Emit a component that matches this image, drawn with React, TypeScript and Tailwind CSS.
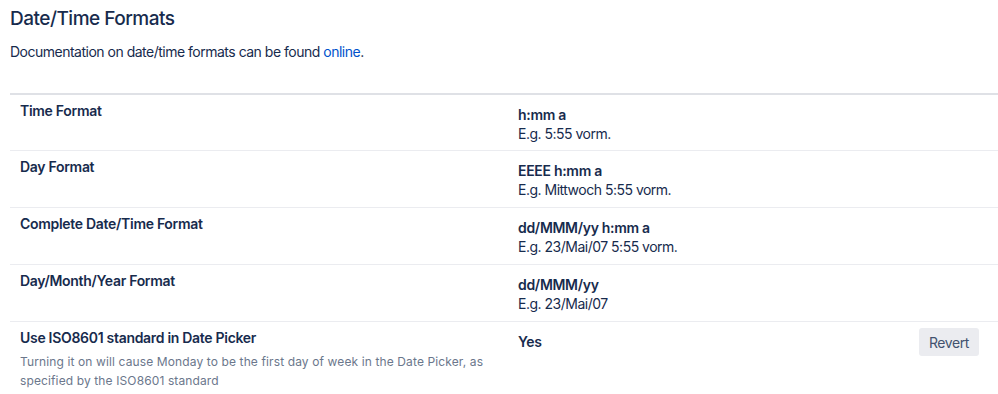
import React from "react";

type Row = { label: string; value: string; example?: string; desc?: string; revert?: boolean };

const rows: Row[] = [
  { label: "Time Format", value: "h:mm a", example: "E.g. 5:55 vorm." },
  { label: "Day Format", value: "EEEE h:mm a", example: "E.g. Mittwoch 5:55 vorm." },
  { label: "Complete Date/Time Format", value: "dd/MMM/yy h:mm a", example: "E.g. 23/Mai/07 5:55 vorm." },
  { label: "Day/Month/Year Format", value: "dd/MMM/yy", example: "E.g. 23/Mai/07" },
  {
    label: "Use ISO8601 standard in Date Picker",
    value: "Yes",
    desc: "Turning it on will cause Monday to be the first day of week in the Date Picker, as specified by the ISO8601 standard",
    revert: true,
  },
];

export default function App() {
  return (
    <div className="bg-white min-h-[394px] pl-[10px] text-[#172B4D] font-['Inter',sans-serif]">
      <h1 className="pt-[5px] text-[19px] leading-[28px] font-medium tracking-[-0.5px]">Date/Time Formats</h1>
      <p className="mt-[9px] text-[14px] leading-[20px] tracking-[-0.5px]">
        Documentation on date/time formats can be found <a className="text-[#0052CC]">online</a>.
      </p>
      <div className="mt-[31px] border-t-2 border-[#DFE1E6]">
        {rows.map((r, i) => (
          <div
            key={i}
            className={`grid grid-cols-[498px_1fr_auto] ${i > 0 ? "border-t border-[#EBECF0]" : ""} ${
              r.desc ? "" : i === 0 ? "h-[55px]" : "h-[57px]"
            }`}
          >
            <div className="pl-[10px] pr-[10px] pt-[6px]">
              <div className="text-[14px] leading-[20px] font-semibold tracking-[-0.3px]">{r.label}</div>
              {r.desc && (
                <div className="mt-[4px] text-[12px] leading-[19px] tracking-[0.12px] text-[#6B778C] pb-[2px]">
                  {r.desc}
                </div>
              )}
            </div>
            <div className="pl-[10px] pt-[10px]">
              <div className="text-[14px] leading-[19px] font-semibold tracking-[-0.3px]">{r.value}</div>
              {r.example && <div className="text-[14px] leading-[19px] tracking-[-0.5px]">{r.example}</div>}
            </div>
            <div className="pr-[19px] pt-[6px]">
              {r.revert && (
                <button className="h-[28px] px-[10px] rounded-[3px] bg-[#EBECF0] text-[14px] tracking-[-0.4px] text-[#42526E]">
                  Revert
                </button>
              )}
            </div>
          </div>
        ))}
      </div>
    </div>
  );
}
